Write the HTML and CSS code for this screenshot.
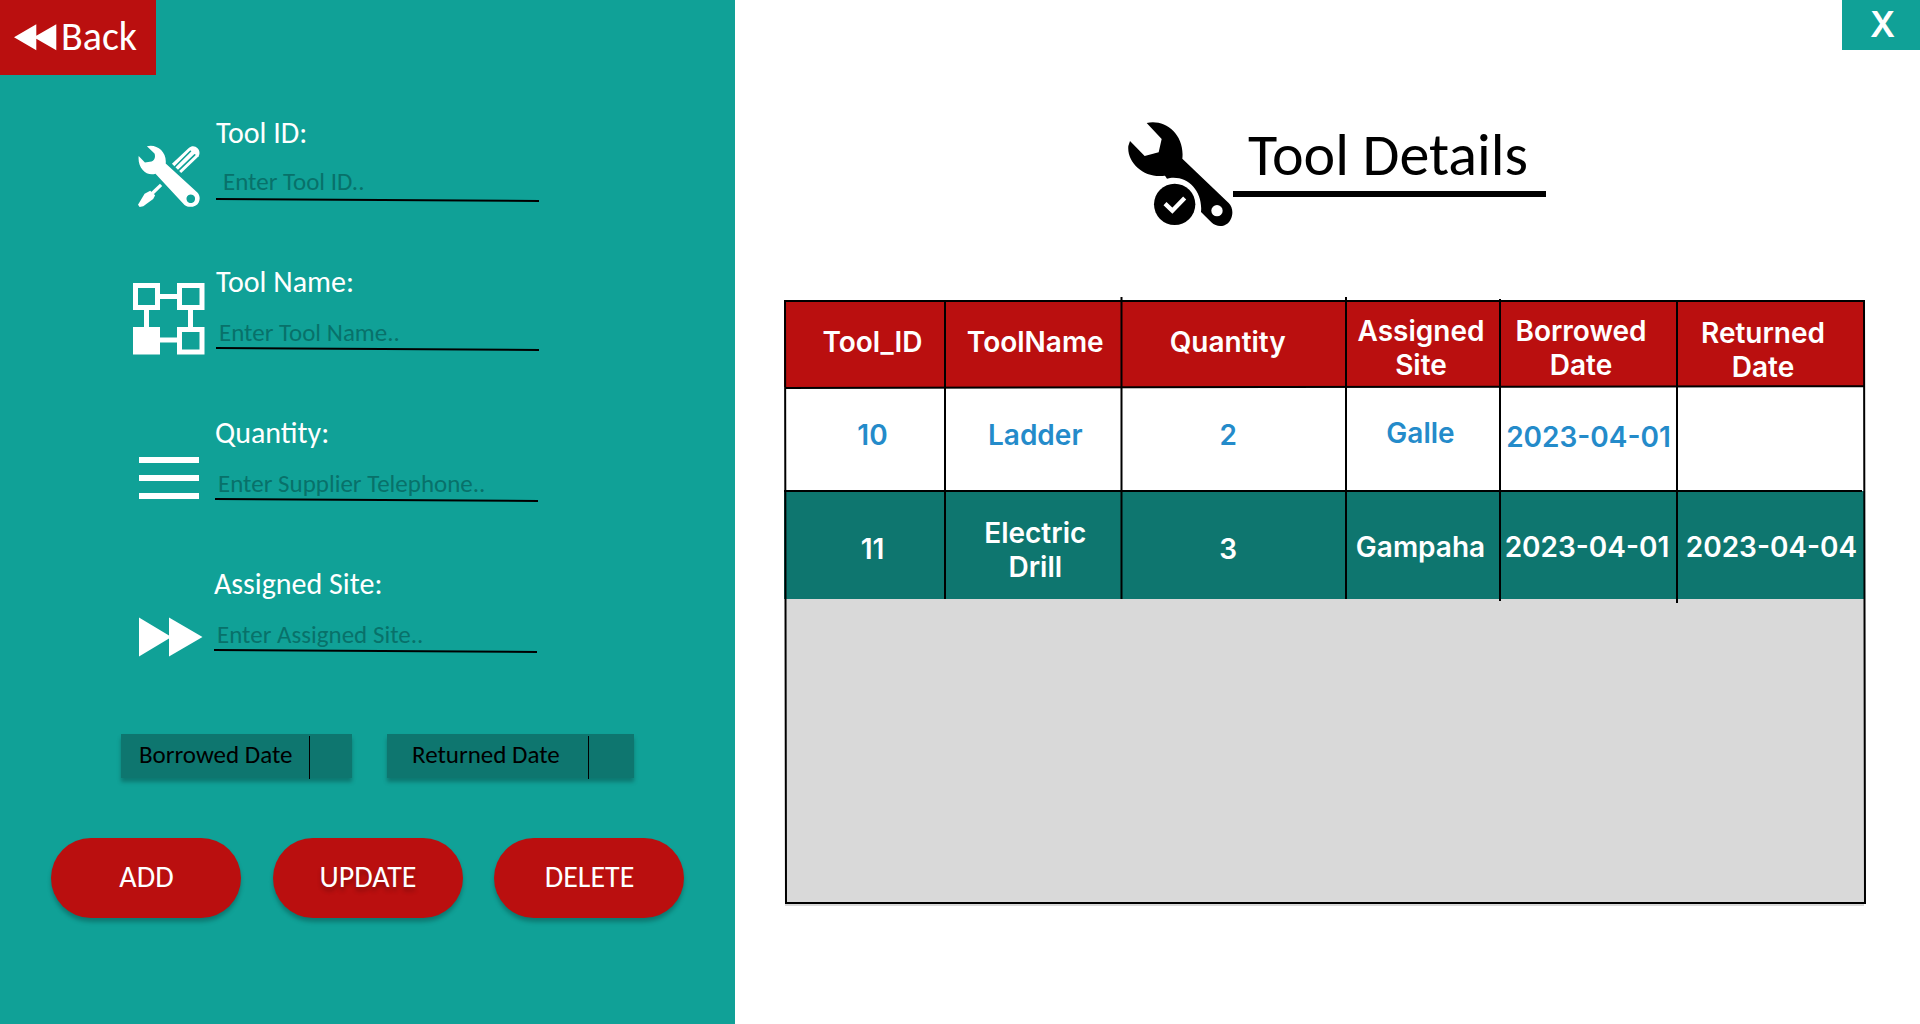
FILE: index.html
```html
<!DOCTYPE html>
<html lang="en">
<head>
<meta charset="utf-8">
<title>Tool Details</title>
<link rel="stylesheet" href="styles.css">
</head>
<body>
<div class="app">
  <aside class="panel">
    <button class="back">
      <svg class="back-icon" width="43" height="27" viewBox="0 0 43 27"><path d="M0 13.3 22.3 0.3V11.8L42.3 0.3V26.3L22.3 14.8V26.3Z" fill="#fff"/></svg>
      <span>Back</span>
    </button>

    <form class="form">
      <div class="field field-id">
        <svg class="icon icon-tools" width="62" height="62" viewBox="24 28 188 188">
          <path d="M127 85 178 37C195 22 218 42 208 62L155 113Z" fill="#fff"/>
          <path d="M136 94 183 47M147 105 196 58" stroke="#10a197" stroke-width="5" stroke-linecap="round"/>
          <path d="M94 149 66 176" stroke="#fff" stroke-width="10"/>
          <path d="M61 167 76 180 70 192 40 214 29 216 24 209 44 176Z" fill="#fff"/>
          <path fill="#fff" fill-rule="evenodd" d="M51 32C80 24 112 48 108 84L204 172C212 180 213 193 208 202C201 216 178 220 165 210L77 115C50 124 22 98 26 61L45 81 65 78C74 74 78 64 74 54ZM184 178a13 13 0 1 0 .1 0Z"/>
        </svg>
        <div class="body">
          <label class="label">Tool ID:</label>
          <span class="value">Enter Tool ID..</span>
          <svg class="rule" width="323" height="4" viewBox="0 0 323 4"><path d="M0 1 323 3" stroke="#000" stroke-width="2"/></svg>
        </div>
      </div>
      <div class="field field-name">
        <svg class="icon icon-nodes" width="72" height="72" viewBox="0 0 72 72" fill="none" stroke="#fff" stroke-width="5">
          <path d="M27 13.5H44M27 57H44M13.5 27V44M57.5 27V44"/>
          <path d="M2.5 2.5h22v22h-22zM46.5 2.5h22.500v22h-22.500zM46.500 46.500h22.500v22.500h-22.500z"/>
          <path d="M2.500 46.500h22v22.500h-22z" fill="#fff"/>
        </svg>
        <div class="body">
          <label class="label">Tool Name:</label>
          <span class="value">Enter Tool Name..</span>
          <svg class="rule" width="323" height="4" viewBox="0 0 323 4"><path d="M0 1 323 3" stroke="#000" stroke-width="2"/></svg>
        </div>
      </div>
      <div class="field field-qty">
        <svg class="icon icon-bars" width="60" height="42" viewBox="0 0 60 42"><path d="M0 3H60M0 21H60M0 39H60" stroke="#fff" stroke-width="6"/></svg>
        <div class="body">
          <label class="label">Quantity:</label>
          <span class="value">Enter Supplier Telephone..</span>
          <svg class="rule" width="323" height="4" viewBox="0 0 323 4"><path d="M0 1 323 3" stroke="#000" stroke-width="2"/></svg>
        </div>
      </div>
      <div class="field field-site">
        <svg class="icon icon-forward" width="64" height="40" viewBox="0 0 64 40"><path d="M0 .5 30 18.500V.5L63.500 20 30 39.500V21.500L0 39.500Z" fill="#fff"/></svg>
        <div class="body">
          <label class="label">Assigned Site:</label>
          <span class="value">Enter Assigned Site..</span>
          <svg class="rule" width="323" height="4" viewBox="0 0 323 4"><path d="M0 1 323 3" stroke="#000" stroke-width="2"/></svg>
        </div>
      </div>
    </form>

    <div class="dates">
      <div class="date date-borrowed"><span class="date-label">Borrowed Date</span></div>
      <div class="date date-returned"><span class="date-label">Returned Date</span></div>
    </div>

    <div class="actions">
      <button class="action">ADD</button>
      <button class="action action-update">UPDATE</button>
      <button class="action">DELETE</button>
    </div>
  </aside>

  <main class="content">
    <button class="close">X</button>
    <header class="heading">
      <svg class="heading-icon" width="105" height="105" viewBox="24 23 315 315">
        <path d="M80 26C135 13 195 60 187 133L326 266C336 276 339 290 336 304C330 334 297 346 274 324L243 293C249 232 205 184 150 191L141 193 135 184C75 194 20 146 25 95L30 80 74 125 116 114 125 74Z"/>
        <circle cx="291" cy="289" r="17" fill="#fff"/>
        <circle cx="164" cy="270" r="62"/>
        <path d="M135 268 157 289 194 251" fill="none" stroke="#fff" stroke-width="13"/>
      </svg>
      <h1 class="title">Tool Details</h1>
    </header>

    <section class="table">
      <div class="row row-head">
        <div class="cell c1">Tool_ID</div>
        <div class="cell c2">ToolName</div>
        <div class="cell c3">Quantity</div>
        <div class="cell c4 two-line">Assigned<br>Site</div>
        <div class="cell c5 two-line">Borrowed<br>Date</div>
        <div class="cell c6 two-line">Returned<br>Date</div>
      </div>
      <div class="row row-light">
        <div class="cell c1">10</div>
        <div class="cell c2">Ladder</div>
        <div class="cell c3">2</div>
        <div class="cell c4">Galle</div>
        <div class="cell c5">2023-04-01</div>
        <div class="cell c6"></div>
      </div>
      <div class="row row-dark">
        <div class="cell c1">11</div>
        <div class="cell c2 two-line">Electric<br>Drill</div>
        <div class="cell c3">3</div>
        <div class="cell c4">Gampaha</div>
        <div class="cell c5">2023-04-01</div>
        <div class="cell c6">2023-04-04</div>
      </div>
      <div class="empty"></div>
      <svg class="grid-lines" width="1090" height="616" viewBox="780 295 1090 616" fill="none" stroke="#000" stroke-width="2">
        <path d="M784 301H1865M785 300 786 904M1864 300 1865 904M785 903H1866M785 388 1864 386M784 491H1862"/>
        <path d="M945 302V599M1121.500 297V599M1346 297V599M1500 299V601M1677 302V603"/>
      </svg>
    </section>
  </main>
</div>
</body>
</html>
```
FILE: styles.css
```css
* { box-sizing: border-box; }

body {
  margin: 0;
  background: #fff;
  font-family: Calibri, Carlito, Lato, sans-serif;
}

button {
  border: 0;
  margin: 0;
  padding: 0;
  color: #fff;
  font-family: inherit;
}

svg { display: block; }

.app {
  display: flex;
  width: 1920px;
  height: 1024px;
  overflow: hidden;
}

/* Left panel */
.panel {
  display: flex;
  flex-direction: column;
  align-items: flex-start;
  width: 735px;
  background: #10a197;
}

.back {
  display: flex;
  align-items: flex-start;
  width: 156px;
  height: 75px;
  padding: 13px 0 0 14px;
  background: #ba0f0f;
  font-size: 40px;
  line-height: 48px;
}
.back-icon { margin: 11px 4px 0 0; }

.form { margin: 39px 0 0 133px; }

.field {
  display: flex;
  height: 151px;
}
.field-id { height: 149px; }

.icon { flex: none; }
.icon-tools { margin: 30.5px 16px 0 5px; }
.icon-nodes { margin: 20px 11px 0 0; }
.icon-bars { margin: 43px 16px 0 6px; }
.icon-forward { margin: 52px 11px 0 6px; }

.body {
  display: flex;
  flex-direction: column;
}
.label {
  height: 37px;
  color: #fff;
  font-size: 30px;
  line-height: 37px;
}
.value {
  margin-top: 18px;
  padding-left: 3px;
  color: #08716a;
  font-size: 25px;
  line-height: 30px;
}
.field-id .value {
  margin-top: 16px;
  padding-left: 7px;
}
.rule { margin-top: -1px; }
.field-id .rule { margin-top: 1px; }

.dates {
  display: flex;
  gap: 35px;
  margin: 18px 0 0 121px;
}
.date {
  display: flex;
  width: 231px;
  height: 44px;
  padding: 6px 0 0 18px;
  background: #0e766f;
  box-shadow: 0 4px 4px rgba(0, 0, 0, .25);
  font-size: 25px;
  line-height: 30px;
}
.date-label { width: 170px; }
.date::after {
  content: "";
  width: 1px;
  height: 43px;
  margin-top: -4px;
  background: #000;
}
.date-returned {
  width: 247px;
  padding-left: 25px;
}
.date-returned .date-label { width: 176px; }

.actions {
  display: flex;
  gap: 31.5px;
  margin: 60px 0 0 51px;
}
.action {
  width: 190px;
  height: 80px;
  padding: 0 0 3px 1px;
  border-radius: 40px;
  background: #ba0f0f;
  box-shadow: 0 4px 4px rgba(0, 0, 0, .25);
  font-size: 30px;
}
.action-update { text-shadow: 0 4px 4px rgba(0, 0, 0, .25); }

/* Right side */
.content {
  display: flex;
  flex-direction: column;
  width: 1185px;
}

.close {
  align-self: flex-end;
  width: 78px;
  height: 50px;
  padding: 0 0 2px 3px;
  background: #10a197;
  font: 600 35px Inter, sans-serif;
}

.heading {
  display: flex;
  height: 178px;
  margin: 72px 0 0 393px;
}
.title {
  width: 313px;
  height: 79px;
  margin: -4px 0 0;
  padding: 1px 0 0 15px;
  border-bottom: 6px solid #000;
  font-size: 60px;
  font-weight: 400;
  line-height: 72px;
}
.heading-icon { flex: none; }

/* Table */
.table {
  position: relative;
  width: 1080px;
  margin: 1px 0 0 49px;
  font: 600 28px/34px Inter, sans-serif;
  text-align: center;
}
.row {
  display: grid;
  grid-template-columns: 161px 176.5px 224.5px 154px 177px 187px;
}
.row-head {
  height: 86px;
  background: #ba0f0f;
  color: #fff;
}
.row-light {
  height: 104px;
  color: #248bca;
}
.row-dark {
  height: 108px;
  background: #0e766f;
  color: #fff;
}
.cell { white-space: nowrap; }
.row-head .cell { padding-top: 24px; }
.row-head .two-line { padding-top: 13px; }
.row-head .c6 { padding: 15px 15px 0 0; }
.row-light .cell { padding-top: 31px; }
.row-light .c4 { padding-top: 29px; }
.row-light .c5 { padding-top: 33px; }
.row-dark .cell { padding-top: 41px; }
.row-dark .two-line { padding-top: 25px; }
.row-dark .c4, .row-dark .c5, .row-dark .c6 { padding-top: 39px; }
.table .c1 { padding-left: 16px; }
.table .c2 { padding-left: 4px; }
.table .c3 { padding-right: 11px; }
.row-head .c3 { padding-right: 12px; }
.table .c4 { padding-right: 5px; }
.row-head .c4 { padding-right: 4px; }
.row-head .c5 { padding-right: 15px; }
.row-dark .c5 { padding-right: 3px; }
.row-dark .c6 { padding-left: 2px; }

.empty {
  height: 307px;
  margin-left: 1px;
  background: #d9d9d9;
}

.grid-lines {
  position: absolute;
  left: -4px;
  top: -6px;
}
```
